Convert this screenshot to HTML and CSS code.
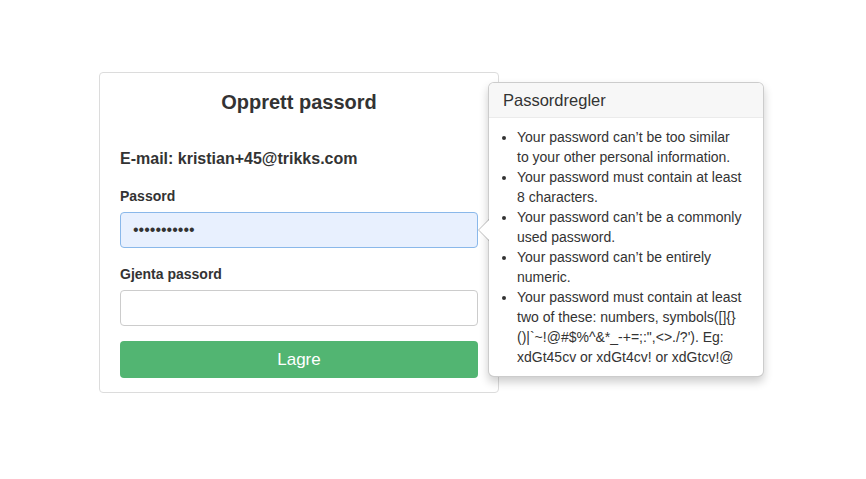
FILE: index.html
```html
<!DOCTYPE html>
<html lang="no">
<head>
    <meta charset="UTF-8">
    <meta name="viewport" content="width=device-width, initial-scale=1.0">
    <title>Opprett passord</title>
    <link rel="stylesheet" href="styles.css">
</head>
<body>
    <div class="page">
        <div class="card-wrap">
            <div class="card">
                <h2 class="card-title">Opprett passord</h2>
                <p class="email">E-mail: kristian+45@trikks.com</p>
                <form id="passwordForm">
                    <div class="form-group">
                        <label for="password">Passord</label>
                        <input type="password" id="password" class="autofilled" value="hemmelig123">
                    </div>
                    <div class="form-group">
                        <label for="password2">Gjenta passord</label>
                        <input type="password" id="password2">
                    </div>
                    <button type="submit">Lagre</button>
                </form>
            </div>

            <div class="popover">
                <div class="arrow"></div>
                <h3 class="popover-title">Passordregler</h3>
                <div class="popover-content">
                    <ul>
                        <li>Your password can’t be too similar to your other personal information.</li>
                        <li>Your password must contain at least 8 characters.</li>
                        <li>Your password can’t be a commonly used password.</li>
                        <li>Your password can’t be entirely numeric.</li>
                        <li>Your password must contain at least two of these: numbers, symbols([]{}()|`~!@#$%^&amp;*_-+=;:",&lt;&gt;./?'). Eg: xdGt45cv or xdGt4cv! or xdGtcv!@</li>
                    </ul>
                </div>
            </div>
        </div>
    </div>
</body>
</html>
```

FILE: styles.css
```css
body {
    margin: 0;
    font-family: "Liberation Sans", Arial, sans-serif;
    color: #333;
    background-color: #ffffff;
}

.page {
    padding: 72px 0 0 99px;
}

.card-wrap {
    position: relative;
    width: 400px;
}

.card {
    border: 1px solid #dcdcdc;
    border-radius: 4px;
    padding: 18px 20px 14px;
}

.card-title {
    margin: 0;
    font-size: 20px;
    line-height: 22px;
    text-align: center;
}

.email {
    margin: 36px 0 17px;
    font-size: 16px;
    font-weight: bold;
    line-height: 20px;
}

.form-group {
    margin-bottom: 16px;
}

label {
    display: block;
    margin-bottom: 6px;
    font-size: 14px;
    font-weight: bold;
    line-height: 20px;
}

input {
    display: block;
    box-sizing: border-box;
    width: 100%;
    height: 36px;
    padding: 6px 12px;
    border: 1px solid #cccccc;
    border-radius: 4px;
    font-family: inherit;
    font-size: 16px;
    color: #333;
    outline: none;
}

input.autofilled {
    background-color: #e8f0fe;
    border-color: #8ab8ea;
}

button {
    display: block;
    width: 100%;
    height: 37px;
    margin-top: -1px;
    border: none;
    border-radius: 4px;
    background-color: #52b572;
    color: #ffffff;
    font-family: inherit;
    font-size: 17px;
    cursor: pointer;
}

.popover {
    position: absolute;
    top: 10px;
    left: 389px;
    width: 276px;
    box-sizing: border-box;
    background-color: #ffffff;
    border: 1px solid rgba(0, 0, 0, 0.2);
    border-radius: 6px;
    box-shadow: 0 5px 10px rgba(0, 0, 0, 0.2);
}

.popover-title {
    margin: 0;
    padding: 8px 14px;
    font-size: 16.5px;
    font-weight: normal;
    line-height: 18px;
    background-color: #f7f7f7;
    border-bottom: 1px solid #ebebeb;
    border-radius: 5px 5px 0 0;
}

.popover-content {
    padding: 9px 19px 9px 14px;
}

.popover-content ul {
    margin: 0;
    padding-left: 14px;
    font-size: 14px;
    line-height: 20px;
}

.arrow,
.arrow::after {
    position: absolute;
    width: 0;
    height: 0;
    border-style: solid;
    border-color: transparent;
}

.arrow {
    top: 50%;
    left: -11px;
    margin-top: -11px;
    border-width: 11px 11px 11px 0;
    border-right-color: rgba(0, 0, 0, 0.25);
}

.arrow::after {
    content: "";
    bottom: -10px;
    left: 1px;
    border-width: 10px 10px 10px 0;
    border-right-color: #ffffff;
}
```
